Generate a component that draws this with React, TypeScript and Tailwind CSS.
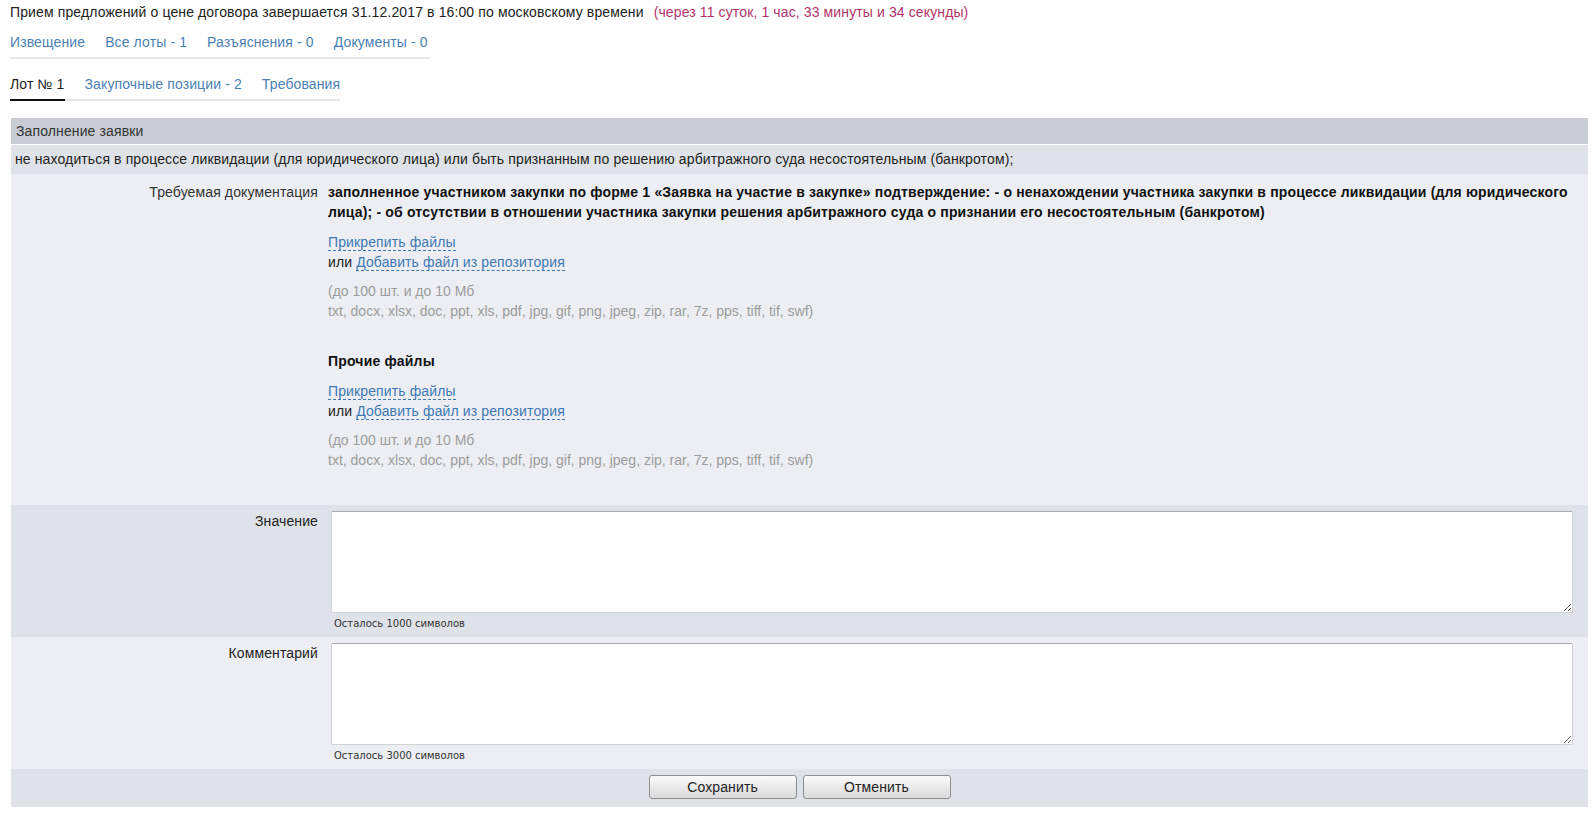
import type { ReactNode } from "react";

const font = { fontFamily: '"Liberation Sans", Arial, sans-serif' };

const topTabs = ["Извещение", "Все лоты - 1", "Разъяснения - 0", "Документы - 0"];
const lotTabs = ["Закупочные позиции - 2", "Требования"];
const formats =
  "txt, docx, xlsx, doc, ppt, xls, pdf, jpg, gif, png, jpeg, zip, rar, 7z, pps, tiff, tif, swf)";

function Attach(): ReactNode {
  return (
    <>
      <div className="mt-[10px] leading-[20px]">
        <a className="text-[#3f79b3] border-b border-dashed border-[#3f79b3] cursor-pointer">
          Прикрепить файлы
        </a>
      </div>
      <div className="leading-[20px] text-[#222]">
        или{" "}
        <a className="text-[#3f79b3] border-b border-dashed border-[#3f79b3] cursor-pointer">
          Добавить файл из репозитория
        </a>
      </div>
      <div className="mt-[9px] leading-[20px] text-[#9c9c9c] tracking-normal">
        <div>(до 100 шт. и до 10 Мб</div>
        <div>{formats}</div>
      </div>
    </>
  );
}

function FieldRow({ label, left, bg }: { label: string; left: string; bg: string }): ReactNode {
  return (
    <div className={`flex ${bg} pt-[6px] pb-[6px]`}>
      <div className="w-[307px] shrink-0 text-right leading-[20px] text-[#222]">{label}</div>
      <div className="flex-1 pl-[13px] pr-[15px]">
        <textarea className="block w-full h-[102px] bg-white border border-[#d3d3d3] border-t-[#a9a9a9] rounded-[2px] outline-none" />
        <div
          className="pl-[3px] pt-[4px] text-[10px] leading-[14px] text-[#333] tracking-normal"
          style={{ fontFamily: '"DejaVu Sans", Verdana, sans-serif' }}
        >
          {left}
        </div>
      </div>
    </div>
  );
}

export default function App(): ReactNode {
  return (
    <div className="min-h-screen bg-white text-[14px] text-[#222] tracking-[0.12px]" style={font}>
      <div className="pl-[10px] pt-[4px]">
        <p className="leading-[17px]">
          Прием предложений о цене договора завершается 31.12.2017 в 16:00 по московскому времени{" "}
          <span className="ml-[6px] text-[#b3336a]">
            (через 11 суток, 1 час, 33 минуты и 34 секунды)
          </span>
        </p>

        <div className="mt-[13px] inline-flex gap-[20px] border-b-2 border-[#e6e6e6] pb-[7px] pr-[2px] leading-[16px] text-[#4a80b5]">
          {topTabs.map((t) => (
            <a key={t} className="cursor-pointer">
              {t}
            </a>
          ))}
        </div>

        <div className="block">
          <div className="mt-[17px] inline-flex gap-[20px] border-b-2 border-[#e6e6e6] leading-[16px]">
            <span className="border-b-2 border-[#111] -mb-[2px] pb-[7px] text-[#222]">Лот № 1</span>
            {lotTabs.map((t) => (
              <a key={t} className="cursor-pointer text-[#4a80b5] pb-[7px]">
                {t}
              </a>
            ))}
          </div>
        </div>
      </div>

      <div className="mt-[17px] ml-[11px] mr-[8px]">
        <div className="h-[27px] bg-[#c9ccd3] px-[5px] leading-[27px] text-[#333] border-b border-white">
          Заполнение заявки
        </div>
        <div className="h-[29px] bg-[#dfe2e8] px-[4px] leading-[29px]">
          не находиться в процессе ликвидации (для юридического лица) или быть признанным по решению арбитражного суда несостоятельным (банкротом);
        </div>

        <div className="flex bg-[#eceef3] pt-[8px] pb-[35px]">
          <div className="w-[307px] shrink-0 text-right leading-[20px] text-[#333]">
            Требуемая документация
          </div>
          <div className="flex-1 pl-[10px] pr-[15px]">
            <div className="font-bold leading-[20px] text-[#111] tracking-[0.17px]">
              заполненное участником закупки по форме 1 «Заявка на участие в закупке» подтверждение: - о ненахождении участника закупки в процессе ликвидации (для юридического лица); - об отсутствии в отношении участника закупки решения арбитражного суда о признании его несостоятельным (банкротом)
            </div>
            <Attach />
            <div className="mt-[30px] font-bold leading-[20px] text-[#111] tracking-[0.17px]">Прочие файлы</div>
            <Attach />
          </div>
        </div>

        <FieldRow label="Значение" left="Осталось 1000 символов" bg="bg-[#dfe2e9]" />
        <FieldRow label="Комментарий" left="Осталось 3000 символов" bg="bg-[#eceef3]" />

        <div className="flex justify-center gap-[6px] bg-[#dfe2e9] pt-[6px] pb-[8px]">
          {["Сохранить", "Отменить"].map((b) => (
            <button
              key={b}
              className="w-[148px] h-[24px] rounded-[3px] border border-[#8f8f8f] bg-gradient-to-b from-[#fbfbfb] to-[#dadada] text-[14px] text-[#222]"
            >
              {b}
            </button>
          ))}
        </div>
      </div>
    </div>
  );
}
